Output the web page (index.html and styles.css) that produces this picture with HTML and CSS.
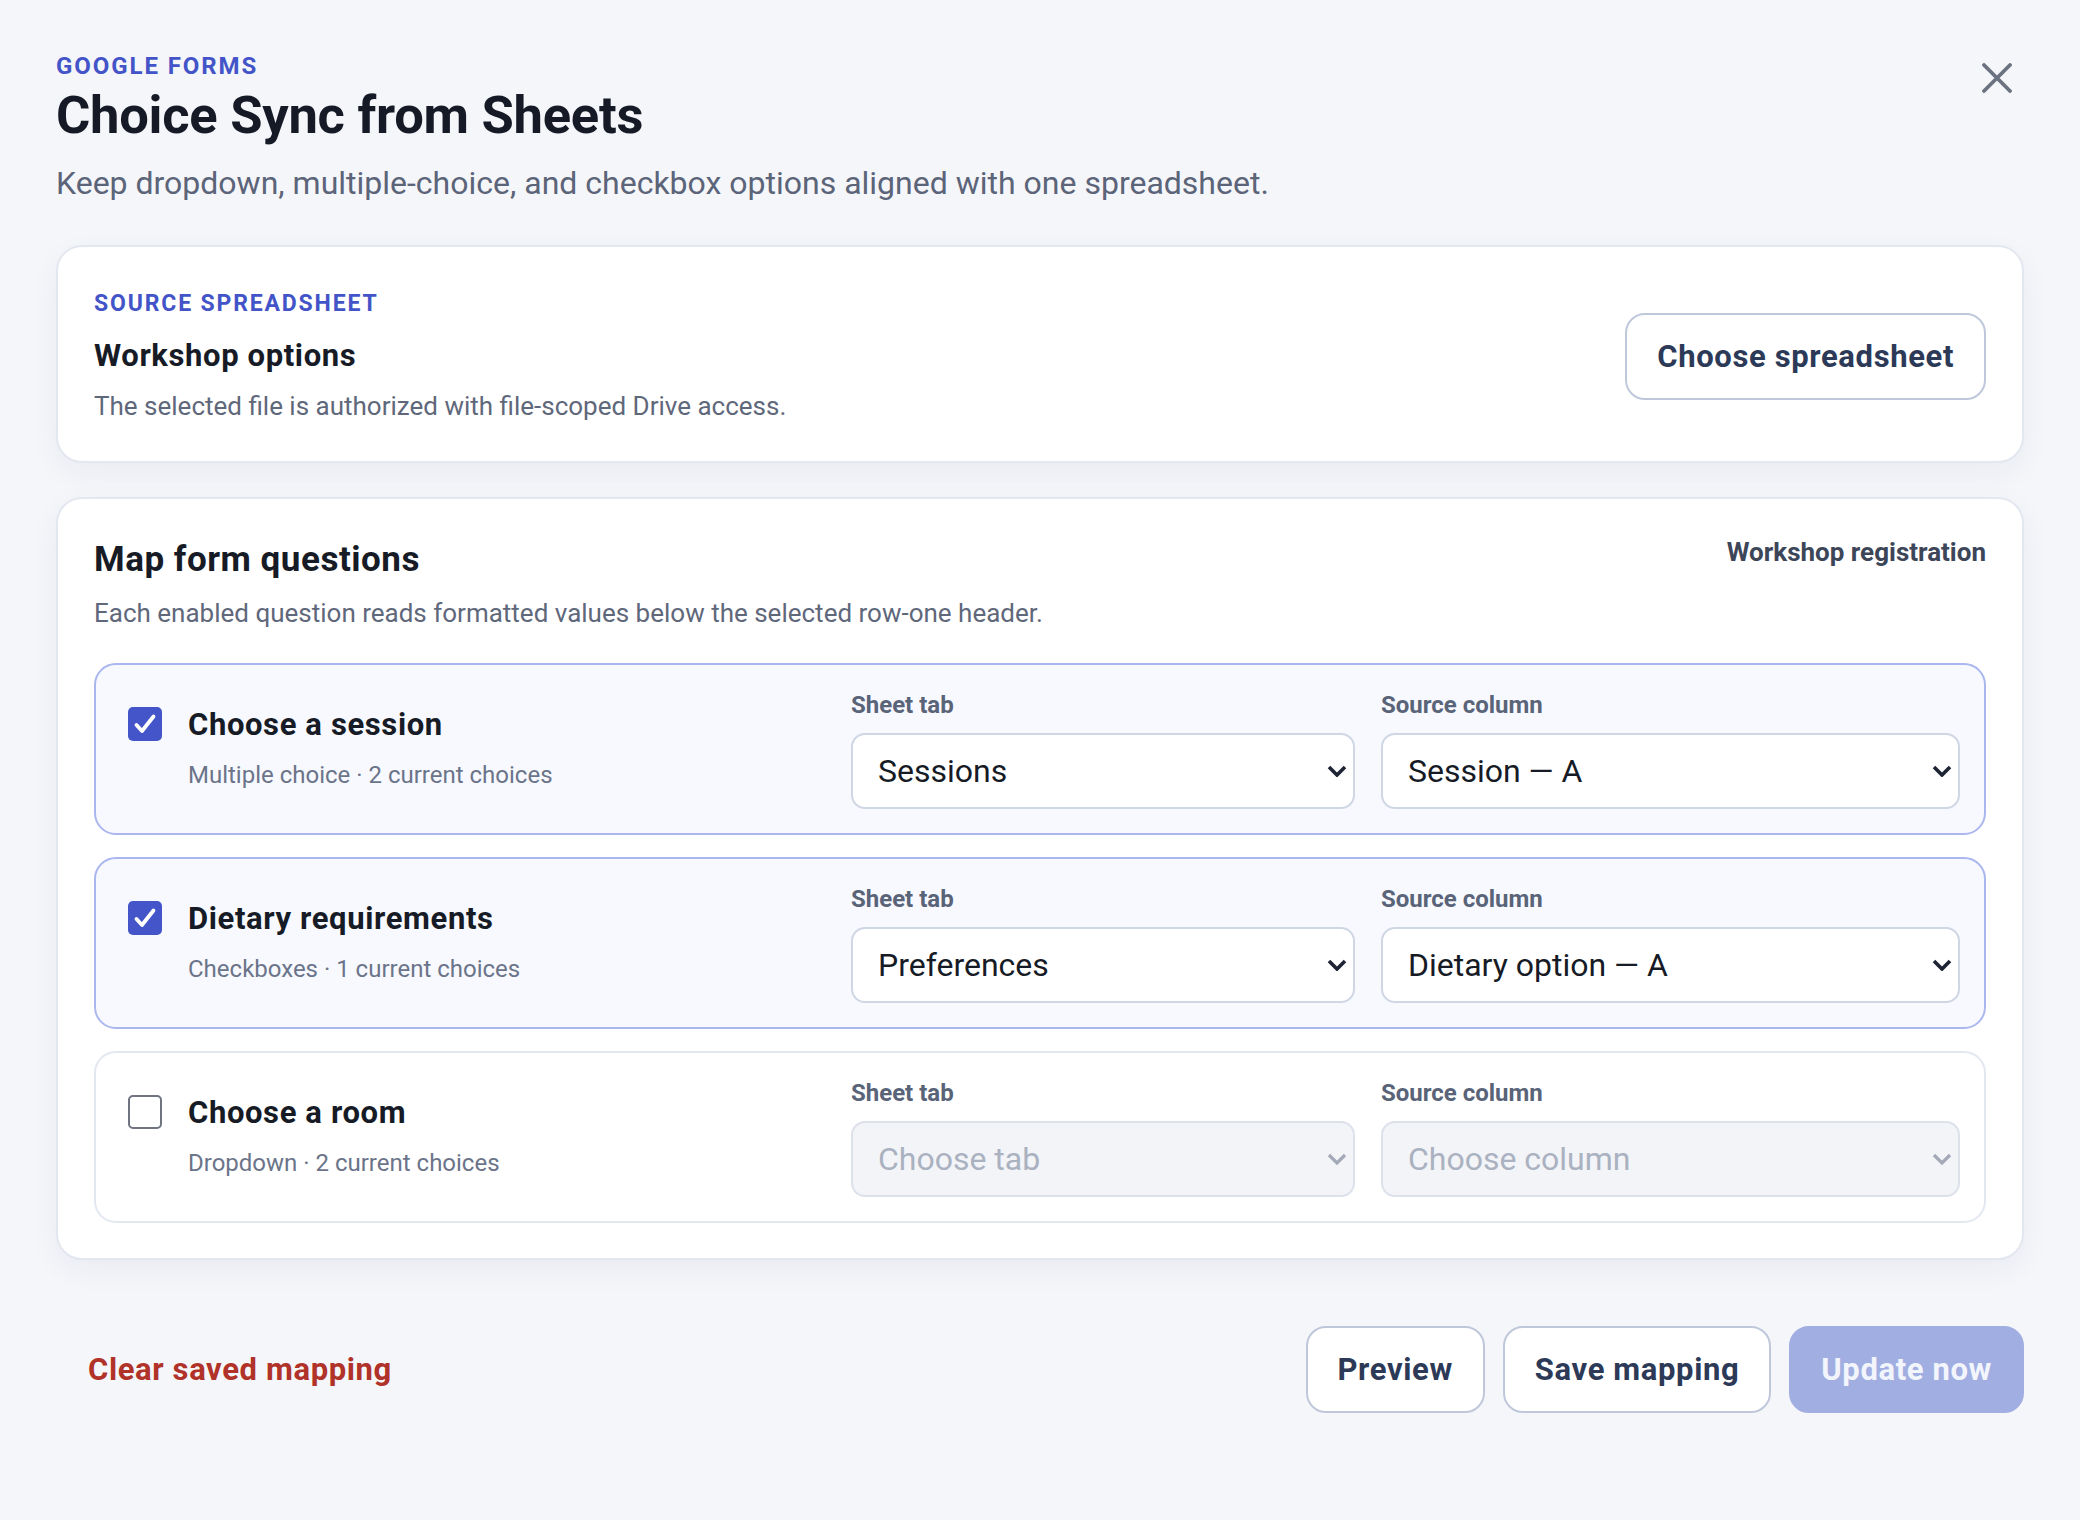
FILE: index.html
```html
<!DOCTYPE html>
<html lang="en">
<head>
<meta charset="utf-8">
<title>Choice Sync from Sheets</title>
<link rel="stylesheet" href="styles.css">
</head>
<body>
<div class="page">
  <header class="page-header">
    <div class="page-heading">
      <div class="eyebrow">Google Forms</div>
      <h1 class="page-title">Choice Sync from Sheets</h1>
      <p class="page-subtitle">Keep dropdown, multiple-choice, and checkbox options aligned with one spreadsheet.</p>
    </div>
    <button class="close-btn" aria-label="Close">
      <svg width="30" height="30" viewBox="0 0 30 30"><path d="M2 2 L28 28 M28 2 L2 28" stroke="#6b7280" stroke-width="3.8" stroke-linecap="round" fill="none"/></svg>
    </button>
  </header>

  <section class="card source-card">
    <div class="source-info">
      <div class="eyebrow card-eyebrow">Source spreadsheet</div>
      <div class="source-name">Workshop options</div>
      <p class="source-note">The selected file is authorized with file-scoped Drive access.</p>
    </div>
    <button class="btn">Choose spreadsheet</button>
  </section>

  <section class="card map-card">
    <div class="map-header">
      <h2 class="map-title">Map form questions</h2>
      <div class="form-name">Workshop registration</div>
    </div>
    <p class="map-note">Each enabled question reads formatted values below the selected row-one header.</p>

    <div class="rows">
      <div class="row is-active">
        <div class="question">
          <span class="check is-checked"><svg width="34" height="34" viewBox="0 0 34 34"><path d="M8.5 18 L14 24 L25.5 9.5" stroke="#fff" stroke-width="3.8" fill="none" stroke-linecap="round" stroke-linejoin="round"/></svg></span>
          <div class="question-text">
            <div class="question-title">Choose a session</div>
            <div class="question-meta">Multiple choice · 2 current choices</div>
          </div>
        </div>
        <label class="field">
          <span class="field-label">Sheet tab</span>
          <span class="select-wrap">
            <select class="select"><option>Sessions</option></select>
            <svg class="select-arrow" width="20" height="12" viewBox="0 0 20 12"><path d="M2 2 L10 10 L18 2" stroke="#1e2433" stroke-width="3.6" fill="none"/></svg>
          </span>
        </label>
        <label class="field">
          <span class="field-label">Source column</span>
          <span class="select-wrap">
            <select class="select"><option>Session — A</option></select>
            <svg class="select-arrow" width="20" height="12" viewBox="0 0 20 12"><path d="M2 2 L10 10 L18 2" stroke="#1e2433" stroke-width="3.6" fill="none"/></svg>
          </span>
        </label>
      </div>

      <div class="row is-active">
        <div class="question">
          <span class="check is-checked"><svg width="34" height="34" viewBox="0 0 34 34"><path d="M8.5 18 L14 24 L25.5 9.5" stroke="#fff" stroke-width="3.8" fill="none" stroke-linecap="round" stroke-linejoin="round"/></svg></span>
          <div class="question-text">
            <div class="question-title">Dietary requirements</div>
            <div class="question-meta">Checkboxes · 1 current choices</div>
          </div>
        </div>
        <label class="field">
          <span class="field-label">Sheet tab</span>
          <span class="select-wrap">
            <select class="select"><option>Preferences</option></select>
            <svg class="select-arrow" width="20" height="12" viewBox="0 0 20 12"><path d="M2 2 L10 10 L18 2" stroke="#1e2433" stroke-width="3.6" fill="none"/></svg>
          </span>
        </label>
        <label class="field">
          <span class="field-label">Source column</span>
          <span class="select-wrap">
            <select class="select"><option>Dietary option — A</option></select>
            <svg class="select-arrow" width="20" height="12" viewBox="0 0 20 12"><path d="M2 2 L10 10 L18 2" stroke="#1e2433" stroke-width="3.6" fill="none"/></svg>
          </span>
        </label>
      </div>

      <div class="row">
        <div class="question">
          <span class="check"></span>
          <div class="question-text">
            <div class="question-title">Choose a room</div>
            <div class="question-meta">Dropdown · 2 current choices</div>
          </div>
        </div>
        <label class="field">
          <span class="field-label">Sheet tab</span>
          <span class="select-wrap">
            <select class="select" disabled><option>Choose tab</option></select>
            <svg class="select-arrow" width="20" height="12" viewBox="0 0 20 12"><path d="M2 2 L10 10 L18 2" stroke="#a3a9b7" stroke-width="3.2" fill="none"/></svg>
          </span>
        </label>
        <label class="field">
          <span class="field-label">Source column</span>
          <span class="select-wrap">
            <select class="select" disabled><option>Choose column</option></select>
            <svg class="select-arrow" width="20" height="12" viewBox="0 0 20 12"><path d="M2 2 L10 10 L18 2" stroke="#a3a9b7" stroke-width="3.2" fill="none"/></svg>
          </span>
        </label>
      </div>
    </div>
  </section>

  <footer class="footer">
    <button class="btn btn-danger">Clear saved mapping</button>
    <div class="footer-actions">
      <button class="btn">Preview</button>
      <button class="btn">Save mapping</button>
      <button class="btn btn-primary" disabled>Update now</button>
    </div>
  </footer>
</div>
</body>
</html>
```
FILE: styles.css
```css
* { box-sizing: border-box; }
html, body { margin: 0; padding: 0; }
body {
  background: #f5f6fa;
  font-family: Roboto, "Liberation Sans", Arial, sans-serif;
  color: #161b26;
  width: 2080px;
  min-height: 1520px;
}
.page {
  padding: 52px 56px 56px;
}
.page-header {
  display: flex;
  justify-content: space-between;
  align-items: flex-start;
}
.eyebrow {
  font-size: 24px;
  line-height: 28px;
  font-weight: 700;
  letter-spacing: 0.08em;
  text-transform: uppercase;
  color: #4354c8;
}
.page-title {
  margin: 4px 0 0;
  font-size: 52.5px;
  line-height: 62px;
  font-weight: 700;
  letter-spacing: -0.005em;
  color: #151a26;
}
.page-subtitle {
  margin: 15px 0 0;
  font-size: 32px;
  line-height: 44px;
  color: #5b6478;
}
.close-btn {
  width: 54px;
  height: 54px;
  margin: -1px 0 0;
  padding: 0;
  border: 0;
  background: transparent;
  display: flex;
  align-items: center;
  justify-content: center;
  cursor: pointer;
}
.card {
  background: #fff;
  border: 2px solid #e3e7ef;
  border-radius: 26px;
  box-shadow: 0 10px 30px rgba(30, 41, 80, 0.05);
}
.source-card {
  margin-top: 40px;
  padding: 43px 36px 38px;
  display: flex;
  align-items: center;
  justify-content: space-between;
}
.card-eyebrow {
  font-size: 23px;
}
.source-name {
  margin-top: 20px;
  font-size: 31px;
  line-height: 36px;
  font-weight: 700;
  letter-spacing: 0.02em;
  color: #161b26;
}
.source-note {
  margin: 15px 0 0;
  font-size: 26px;
  line-height: 34px;
  color: #5f687b;
}
.btn {
  font-family: inherit;
  font-size: 31px;
  line-height: 35px;
  font-weight: 700;
  letter-spacing: 0.02em;
  color: #2c3a58;
  background: #fff;
  border: 2px solid #bfc8da;
  border-radius: 20px;
  padding: 24px 30px;
  cursor: pointer;
  white-space: nowrap;
}
.map-card {
  margin-top: 34px;
  padding: 40px 36px 35px;
}
.map-header {
  display: flex;
  justify-content: space-between;
  align-items: flex-start;
}
.map-title {
  margin: 0;
  font-size: 35px;
  line-height: 42px;
  font-weight: 700;
  letter-spacing: 0.015em;
  color: #161b26;
}
.form-name {
  font-size: 26px;
  line-height: 26px;
  font-weight: 700;
  color: #3c4658;
}
.map-note {
  margin: 15px 0 0;
  font-size: 26px;
  line-height: 34px;
  color: #5f687b;
}
.rows {
  margin-top: 33px;
  display: flex;
  flex-direction: column;
  gap: 22px;
}
.row {
  display: grid;
  grid-template-columns: minmax(0, 1.383fr) minmax(0, 1fr) minmax(0, 1.149fr);
  column-gap: 26px;
  align-items: center;
  padding: 24px 24px 24px 32px;
  border: 2px solid #e3e7f0;
  border-radius: 22px;
  background: #fff;
}
.row.is-active {
  border-color: #aab6ee;
  background: #f7f9ff;
}
.question {
  display: flex;
  align-items: flex-start;
  gap: 26px;
}
.check {
  flex: none;
  width: 34px;
  height: 34px;
  border-radius: 5px;
  border: 2.5px solid #6f7480;
  background: #fff;
  display: flex;
  align-items: center;
  justify-content: center;
}
.check.is-checked {
  border: 0;
  background: #4355c9;
}
.question-title {
  font-size: 31px;
  line-height: 36px;
  font-weight: 700;
  letter-spacing: 0.02em;
  color: #161b26;
}
.question-meta {
  margin-top: 16px;
  font-size: 24px;
  line-height: 32px;
  color: #6b7489;
}
.field {
  display: flex;
  flex-direction: column;
  gap: 12px;
}
.field-label {
  font-size: 24px;
  line-height: 32px;
  font-weight: 700;
  color: #5a6478;
}
.select-wrap {
  position: relative;
  display: block;
}
.select {
  display: block;
  appearance: none;
  -webkit-appearance: none;
  height: 76px;
  width: 100%;
  font-family: inherit;
  font-size: 32px;
  color: #161b26;
  background: #fff;
  border: 2px solid #cfd6e4;
  border-radius: 14px;
  padding: 0 40px 0 25px;
}
.select:disabled {
  background: #f3f4f8;
  border-color: #dde1ea;
  color: #aab1c0;
  opacity: 1;
}
.select-arrow {
  position: absolute;
  right: 8px;
  top: 50%;
  margin-top: -6px;
  pointer-events: none;
}
.footer {
  margin-top: 66px;
  display: flex;
  justify-content: space-between;
  align-items: center;
}
.footer-actions {
  display: flex;
  gap: 18px;
}
.btn-danger {
  border-color: transparent;
  background: transparent;
  color: #b03228;
}
.btn-primary {
  background: #a1aee1;
  border-color: #a1aee1;
  color: #f3f5fc;
}
```
